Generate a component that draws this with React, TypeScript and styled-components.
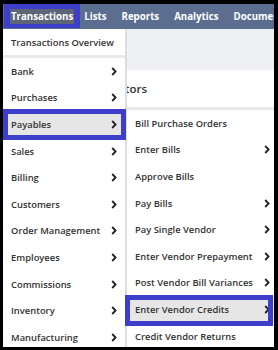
import React from "react";
import styled, { createGlobalStyle, css } from "styled-components";

const GlobalStyle = createGlobalStyle`
  html, body {
    margin: 0;
    padding: 0;
    background: #000;
  }
  body {
    font-family: "Open Sans", "Liberation Sans", sans-serif;
  }
`;

const annotation = css`
  content: "";
  position: absolute;
  border: 5px solid #3d3fcb;
  pointer-events: none;
`;

const Frame = styled.div`
  position: relative;
  width: 271px;
  height: 343px;
  margin: 4px 0 0 3px;
  overflow: hidden;
  background: #eef0f4;
`;

const NavBar = styled.div`
  display: flex;
  align-items: center;
  height: 25px;
  padding-left: 7px;
  background: #5b6e8f;
  white-space: nowrap;
`;

const NavItem = styled.div<{ $active?: boolean }>`
  position: relative;
  display: flex;
  align-items: center;
  height: 15px;
  padding: 0 1px;
  margin-right: ${(p) => (p.$active ? "9px" : "13px")};
  font-size: 9.7px;
  font-weight: 700;
  color: #fff;
  background: ${(p) => (p.$active ? "#5d6678" : "transparent")};
  ${(p) =>
    p.$active &&
    css`
      &::after {
        ${annotation}
        top: -6px;
        bottom: -4px;
        left: -6px;
        right: -6px;
        border-width: 6px 6px 4px 6px;
      }
    `}
`;

const PageHead = styled.div`
  height: 41px;
`;

const Portlet = styled.div`
  background: #fff;
  height: 37px;
  display: flex;
  align-items: center;
  border-bottom: 3px solid #e6e8ec;
`;

const PortletTitle = styled.div`
  width: 144px;
  flex: none;
  text-align: right;
  white-space: nowrap;
  direction: rtl;
  font-size: 11.5px;
  font-weight: 600;
  color: #333;
`;

const Menu = styled.div`
  position: absolute;
  top: 25px;
  left: 0;
  width: 122px;
  background: #fff;
  border-right: 2px solid #dcdde0;
`;

const SubMenu = styled.div`
  position: absolute;
  top: 106px;
  left: 124px;
  width: 147px;
  background: #fff;
`;

const Row = styled.div<{ $hover?: boolean; $tall?: boolean }>`
  position: relative;
  display: flex;
  align-items: center;
  justify-content: space-between;
  height: ${(p) => (p.$tall ? "26px" : "26.6px")};
  padding: 0 8px;
  font-size: 9.4px;
  font-weight: 600;
  color: #333;
  white-space: nowrap;
  background: ${(p) => (p.$hover ? "#e6e6e6" : "transparent")};
  ${(p) =>
    p.$hover &&
    css`
      &::after {
        ${annotation}
        top: -2px;
        bottom: -2px;
        left: 0;
        right: -1px;
      }
    `}
`;

const SubRow = styled(Row)`
  padding: 0 4px 0 8px;
  ${(p) =>
    p.$hover &&
    css`
      &::after {
        top: -1px;
        bottom: -3px;
        left: -2px;
        right: 1px;
      }
    `}
`;

const Divider = styled.div`
  height: 3px;
  background: #e8e9eb;
`;

const Chevron = () => (
  <svg width="6" height="9" viewBox="0 0 6 9">
    <path d="M1.2 1 L4.6 4.5 L1.2 8" fill="none" stroke="#222" strokeWidth="1.8" />
  </svg>
);

const navItems = ["Transactions", "Lists", "Reports", "Analytics", "Documents"];

const mainItems: [string, boolean][] = [
  ["Bank", true],
  ["Purchases", true],
  ["Payables", true],
  ["Sales", true],
  ["Billing", true],
  ["Customers", true],
  ["Order Management", true],
  ["Employees", true],
  ["Commissions", true],
  ["Inventory", true],
  ["Manufacturing", true],
];

const subItems: [string, boolean][] = [
  ["Bill Purchase Orders", false],
  ["Enter Bills", true],
  ["Approve Bills", false],
  ["Pay Bills", true],
  ["Pay Single Vendor", true],
  ["Enter Vendor Prepayment", true],
  ["Post Vendor Bill Variances", true],
  ["Enter Vendor Credits", true],
  ["Credit Vendor Returns", false],
];

export default function App() {
  return (
    <>
      <GlobalStyle />
      <Frame>
        <NavBar>
          {navItems.map((n, i) => (
            <NavItem key={n} $active={i === 0}>
              {n}
            </NavItem>
          ))}
        </NavBar>
        <PageHead />
        <Portlet>
          <PortletTitle>Key Performance Indicators</PortletTitle>
        </Portlet>

        <Menu>
          <Row $tall>Transactions Overview</Row>
          <Divider />
          {mainItems.map(([label, more]) => (
            <Row key={label} $hover={label === "Payables"}>
              {label}
              {more && <Chevron />}
            </Row>
          ))}
        </Menu>

        <SubMenu>
          {subItems.map(([label, more]) => (
            <SubRow key={label} $hover={label === "Enter Vendor Credits"}>
              {label}
              {more && <Chevron />}
            </SubRow>
          ))}
        </SubMenu>
      </Frame>
    </>
  );
}
